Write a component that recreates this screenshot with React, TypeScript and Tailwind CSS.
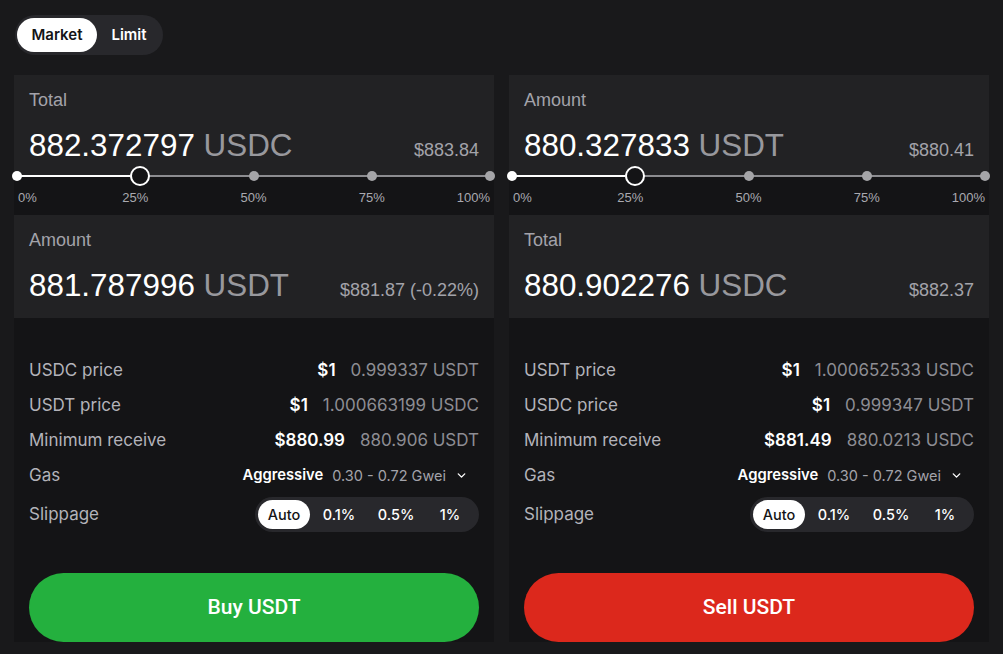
import { ChevronDown } from 'lucide-react'

type Side = {
  top: { label: string; value: string; unit: string; usd: string }
  bottom: { label: string; value: string; unit: string; usd: string }
  rows: { label: string; usd: string; value: string }[]
  action: string
  color: 'buy' | 'sell'
}

const SIDES: Side[] = [
  {
    top: { label: 'Total', value: '882.372797', unit: 'USDC', usd: '$883.84' },
    bottom: { label: 'Amount', value: '881.787996', unit: 'USDT', usd: '$881.87 (-0.22%)' },
    rows: [
      { label: 'USDC price', usd: '$1', value: '0.999337 USDT' },
      { label: 'USDT price', usd: '$1', value: '1.000663199 USDC' },
      { label: 'Minimum receive', usd: '$880.99', value: '880.906 USDT' }
    ],
    action: 'Buy USDT',
    color: 'buy'
  },
  {
    top: { label: 'Amount', value: '880.327833', unit: 'USDT', usd: '$880.41' },
    bottom: { label: 'Total', value: '880.902276', unit: 'USDC', usd: '$882.37' },
    rows: [
      { label: 'USDT price', usd: '$1', value: '1.000652533 USDC' },
      { label: 'USDC price', usd: '$1', value: '0.999347 USDT' },
      { label: 'Minimum receive', usd: '$881.49', value: '880.0213 USDC' }
    ],
    action: 'Sell USDT',
    color: 'sell'
  }
]

const STEPS = [0, 25, 50, 75, 100]

function Card({ label, value, unit, usd, className }: { label: string; value: string; unit: string; usd: string; className: string }) {
  return (
    <div className={`flex flex-col gap-[17px] bg-[#222224] px-[15px] pt-[14px] font-['Liberation_Sans',Arial,sans-serif] ${className}`}>
      <div className="text-[18px] leading-[22px] text-[#a3a3aa]">{label}</div>
      <div className="flex items-baseline justify-between">
        <div className="text-[31.4px] leading-[36px]">
          <span className="text-white">{value}</span>
          <span className="text-[#98989d]"> {unit}</span>
        </div>
        <div className="text-[18px] text-[#a3a3aa]">{usd}</div>
      </div>
    </div>
  )
}

function Slider() {
  return (
    <div className="relative h-[39px] font-['Liberation_Sans',Arial,sans-serif]">
      <div className="absolute left-[3px] right-[4px] top-0">
        <div className="absolute left-0 right-0 top-[-1px] h-[2px] bg-[#8c8c90]" />
        <div className="absolute left-0 top-[-1px] h-[2px] w-[26%] bg-white" />
        {STEPS.map(s => (
          <div
            key={s}
            className={`absolute top-[-5px] h-[10px] w-[10px] -translate-x-1/2 rounded-full ${s === 0 ? 'bg-white' : 'bg-[#a5a5a8]'}`}
            style={{ left: `${s}%` }}
          />
        ))}
        <div className="absolute left-[26%] top-[-10px] h-[20px] w-[20px] -translate-x-1/2 rounded-full border-2 border-white bg-[#141416]" />
        {STEPS.map(s => (
          <div
            key={'l' + s}
            className={`absolute top-[14px] text-[13px] leading-[16px] text-[#a9a9b0] ${s === 0 ? 'left-[1px]' : s === 100 ? 'right-0' : '-translate-x-1/2'}`}
            style={s === 0 || s === 100 ? undefined : { left: `${s}%` }}
          >
            {s}%
          </div>
        ))}
      </div>
    </div>
  )
}

function Column({ side }: { side: Side }) {
  return (
    <div className="flex flex-col bg-[#141416]">
      <Card {...side.top} className="h-[101px]" />
      <Slider />
      <Card {...side.bottom} className="h-[103px]" />

      <div className="mt-[35px] px-[15px] font-['Inter',sans-serif]">
        {side.rows.map(r => (
          <div key={r.label} className="flex h-[35px] items-center justify-between text-[17px]">
            <span className="text-[#b3b3ba]">{r.label}</span>
            <span className="flex items-center gap-[15px]">
              <span className="font-semibold text-white">{r.usd}</span>
              <span className="text-[#8d8d93]">{r.value}</span>
            </span>
          </div>
        ))}
        <div className="flex h-[35px] items-center justify-between">
          <span className="text-[17px] text-[#b3b3ba]">Gas</span>
          <span className="flex items-center">
            <span className="text-[14.8px] font-semibold text-white">Aggressive</span>
            <span className="ml-[9px] text-[14.5px] text-[#a3a3aa]">0.30 - 0.72 Gwei</span>
            <ChevronDown className="ml-[9px] mr-[11px] h-[13px] w-[13px] text-white" strokeWidth={2.5} />
          </span>
        </div>
        <div className="mt-[4px] flex h-[35px] items-center justify-between">
          <span className="text-[17px] text-[#b3b3ba]">Slippage</span>
          <div className="flex h-[35px] w-[224px] items-center rounded-full bg-[#28282c] p-[3px] text-[14.5px] font-medium text-white">
            <span className="flex h-[29px] w-[52px] items-center justify-center rounded-full bg-white text-[#141416]">Auto</span>
            <span className="flex w-[58px] justify-center">0.1%</span>
            <span className="flex w-[56px] justify-center">0.5%</span>
            <span className="flex w-[52px] justify-center">1%</span>
          </div>
        </div>
      </div>

      <div className="mt-[41px] px-[15px]">
        <button
          className={`h-[69px] w-full rounded-full font-['Roboto',sans-serif] text-[21px] font-medium text-white ${side.color === 'buy' ? 'bg-[#24b03e]' : 'bg-[#dc281c]'}`}
        >
          {side.action}
        </button>
      </div>
    </div>
  )
}

export default function App() {
  return (
    <div className="min-h-screen bg-[#19191b] font-['Inter',sans-serif]">
      <div className="px-[15px] pt-[15px]">
        <div className="inline-flex h-[40px] items-center rounded-full bg-[#28282c] p-[2px] text-[15px] font-semibold">
          <span className="flex h-[34px] w-[80px] items-center justify-center rounded-full bg-white text-[#141416]">Market</span>
          <span className="flex w-[64px] justify-center text-white">Limit</span>
        </div>
      </div>
      <div className="mt-[20px] grid grid-cols-2 gap-[15px] px-[14px]">
        {SIDES.map(s => (
          <Column key={s.action} side={s} />
        ))}
      </div>
    </div>
  )
}
